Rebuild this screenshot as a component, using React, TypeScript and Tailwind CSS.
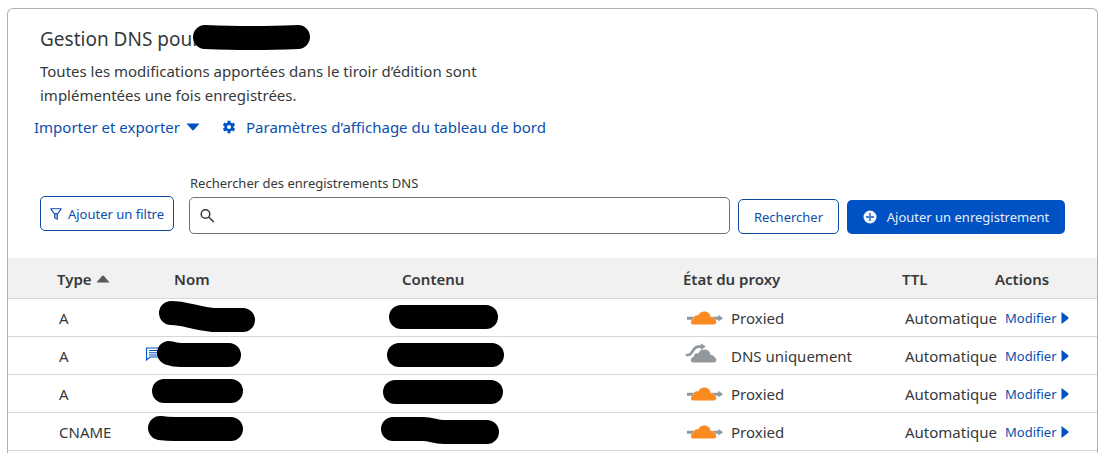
import React from "react";

type DnsRecord = {
  type: string;
  name: string;
  content: string;
  proxied: boolean;
  comment?: boolean;
};

const records: DnsRecord[] = [
  { type: "A", name: "M26 14 Q34 14 46 17 T68 21 H98", content: "M21 18 H106", proxied: true },
  { type: "A", name: "M24 16 Q30 18 36 18 H84", content: "M19 18 H112", proxied: false, comment: true },
  { type: "A", name: "M19 16 H86", content: "M15 17 H111", proxied: true },
  { type: "CNAME", name: "M15 15 Q22 16 30 16 H86", content: "M13 16 H43 C52 16 54 19 64 19 H107", proxied: true },
];

function Mask({ d }: { d: string }) {
  return (
    <svg className="block h-[37px] w-[130px]" viewBox="0 0 130 37" aria-hidden="true">
      <path d={d} fill="none" stroke="#000" strokeWidth="24" strokeLinecap="round" strokeLinejoin="round" />
    </svg>
  );
}

const cloud =
  "M9.500 17.500Q8 17.500 8 15.500C8 13.200 9.200 12 11 11.800C10.600 9.300 12.800 7.600 15.300 8.600C16.200 6 18.600 4.500 21.500 4.500C25 4.500 27.200 6.800 27.600 10.200C29.600 9.800 31 10.600 31.200 12.200C32.600 12.500 33.300 13.600 33.300 15C33.300 16.500 32.400 17.500 31 17.500Z";

function ProxyIcon({ proxied }: { proxied: boolean }) {
  return proxied ? (
    <svg className="h-[22px] w-10 shrink-0" viewBox="0 0 40 22" aria-hidden="true">
      <path d="M4 9.700h8v3H4zM28 9.700h7.500V7.800l4.500 3.400-4.500 3.400v-1.900H28z" fill="#92979b" />
      <path d={cloud} fill="#f98b20" stroke="#fff" strokeWidth=".6" paintOrder="stroke" />
    </svg>
  ) : (
    <svg className="h-[22px] w-10 shrink-0 overflow-visible" viewBox="0 0 40 22" aria-hidden="true">
      <path d={cloud} fill="#92979b" />
      <path d="M2.700 10h2.300c5 0 4.500-8.300 10.500-8.300h2.800" fill="none" stroke="#92979b" strokeWidth="2.700" />
      <path d="M17.800-1.700l5 3.300-5 3.300z" fill="#92979b" />
    </svg>
  );
}

export default function App() {
  return (
    <main className="bg-white px-[7px] pt-2 font-['Noto_Sans','Open_Sans',sans-serif] text-[15px] leading-6 text-[#36393a]">
      <section className="mr-[7px] rounded-t-md border border-b-0 border-[#b0b0b0]">
        <header className="pt-4 pl-8">
          <h1 className="relative text-[19px] leading-7">
            Gestion DNS pour
            <svg className="absolute -top-1 left-[150px] h-8 w-[124px]" viewBox="0 0 124 32" aria-hidden="true">
              <path d="M15 16 Q40 17 60 17 T108 16" fill="none" stroke="#000" strokeWidth="24" strokeLinecap="round" />
            </svg>
          </h1>
          <p className="mt-1.5 max-w-[460px]">
            Toutes les modifications apportées dans le tiroir d’édition sont implémentées une fois enregistrées.
          </p>
          <nav className="mt-2 -ml-1.5 flex items-center text-[#0b4fae]">
            <button type="button" className="flex items-center gap-1.5">
              Importer et exporter
              <svg className="h-2 w-3.5" viewBox="0 0 14 8" aria-hidden="true">
                <path d="M.5.500h13L8 6.800q-1 1-2 0z" fill="#0051c3" />
              </svg>
            </button>
            <a href="#parametres" className="ml-[22px] flex items-center gap-2.5">
              <svg className="size-3.5" viewBox="0 0 14 14" aria-hidden="true">
                <circle cx="7" cy="7" r="3.400" fill="none" stroke="#0051c3" strokeWidth="2.600" />
                <path
                  d="M7 .8v2M7 11.200v2M1.600 3.900l1.800 1M10.600 9.100l1.800 1M1.600 10.100l1.800-1M10.600 4.900l1.800-1"
                  stroke="#0051c3"
                  strokeWidth="3"
                />
              </svg>
              Paramètres d’affichage du tableau de bord
            </a>
          </nav>
        </header>

        <form className="mt-8 mb-6 flex items-end pr-8 pl-8 text-[13px]" onSubmit={(e) => e.preventDefault()}>
          <button
            type="button"
            className="mb-[3px] flex h-[35px] w-[134px] shrink-0 items-center justify-center gap-1.5 rounded-[5px] border border-[#0b4a9e] whitespace-nowrap text-[#0b4fae]"
          >
            <svg className="size-3 shrink-0" viewBox="0 0 12 12" aria-hidden="true">
              <path d="M.8.800h10.400L7.500 5.800H4.500z" fill="none" stroke="#0b4fae" strokeWidth="1.100" strokeLinejoin="round" />
              <path d="M4.500 5.800h3v5.700l-3-1.500z" fill="#7da2d6" stroke="#0b4fae" strokeWidth=".8" />
            </svg>
            Ajouter un filtre
          </button>
          <div className="ml-[15px] flex flex-1 flex-col">
            <label htmlFor="search" className="mb-0.5 pl-px leading-6">
              Rechercher des enregistrements DNS
            </label>
            <div className="flex h-[37px] items-center rounded-[5px] border border-[#6e7275] pl-2.5">
              <svg className="size-4 shrink-0" viewBox="0 0 16 16" aria-hidden="true">
                <circle cx="5.500" cy="6" r="4.300" fill="none" stroke="#36393a" strokeWidth="1.500" />
                <path d="M8.600 9l5.200 5" stroke="#36393a" strokeWidth="1.600" />
              </svg>
              <input id="search" type="text" className="min-w-0 flex-1 bg-transparent px-2 outline-none" />
            </div>
          </div>
          <button
            type="submit"
            className="ml-2 h-[35px] w-[101px] shrink-0 rounded-[5px] border border-[#0b4a9e] text-[#0b4fae]"
          >
            Rechercher
          </button>
          <button
            type="button"
            className="ml-2 flex h-[34px] w-[218px] shrink-0 items-center justify-center gap-2.5 rounded-[5px] bg-[#0051c3] whitespace-nowrap text-[#e6eefa]"
          >
            <svg className="size-3.5 shrink-0" viewBox="0 0 14 14" aria-hidden="true">
              <circle cx="7" cy="7" r="6.500" fill="#f0f5fc" />
              <path d="M7 3v8M3 7h8" stroke="#4a80d0" strokeWidth="1.800" />
            </svg>
            Ajouter un enregistrement
          </button>
        </form>

        <table className="w-full table-fixed border-collapse text-left whitespace-nowrap">
          <colgroup>
            <col className="w-[137px]" />
            <col className="w-[235px]" />
            <col />
            <col className="w-[218px]" />
            <col className="w-[94px]" />
            <col className="w-[110px]" />
          </colgroup>
          <thead>
            <tr className="h-10 border-b border-[#d5d7d8] bg-[#f1f1f1] [&>th]:p-0 [&>th]:pt-0.5 [&>th]:font-semibold">
              <th scope="col" aria-sort="ascending">
                <span className="flex items-center gap-1 pl-[49px]">
                  Type
                  <svg className="h-2 w-3.5" viewBox="0 0 14 8" aria-hidden="true">
                    <path d="M.5 7.500L6 1q1-1 2 0l5.500 6.500z" fill="#595959" />
                  </svg>
                </span>
              </th>
              <th scope="col"><span className="pl-[29px]">Nom</span></th>
              <th scope="col"><span className="pl-[22px]">Contenu</span></th>
              <th scope="col"><span className="pl-2">État du proxy</span></th>
              <th scope="col"><span className="pl-[9px]">TTL</span></th>
              <th scope="col"><span className="pl-2">Actions</span></th>
            </tr>
          </thead>
          <tbody>
            {records.map((r, i) => (
              <tr key={i} className="h-[38px] border-b border-[#d5d7d8] [&>td]:p-0">
                <td><span className="block pt-0.5 pl-[51px]">{r.type}</span></td>
                <td>
                  <div className="relative">
                    {r.comment && (
                      <svg className="absolute top-2.5 left-0 h-3.5 w-4" viewBox="0 0 16 14" aria-hidden="true">
                        <path d="M1.500 1H15v9H5l-3.500 3zM4 3.500h10M4 5.700h10M4 8h10" fill="none" stroke="#0051c3" strokeWidth="1.100" />
                      </svg>
                    )}
                    <div className="relative"><Mask d={r.name} /></div>
                  </div>
                </td>
                <td><Mask d={r.content} /></td>
                <td>
                  <span className="flex items-center gap-2 pt-0.5 pl-2">
                    <ProxyIcon proxied={r.proxied} />
                    {r.proxied ? "Proxied" : "DNS uniquement"}
                  </span>
                </td>
                <td><span className="block pt-0.5 pl-3">Automatique</span></td>
                <td>
                  <a href="#modifier" className="flex items-center gap-1 pt-0.5 pl-[18px] text-[13px] text-[#0b4fae]">
                    Modifier
                    <svg className="h-3 w-2" viewBox="0 0 8 12" aria-hidden="true">
                      <path d="M.5 0L7 5q1 1 0 2L.5 12z" fill="#0051c3" />
                    </svg>
                  </a>
                </td>
              </tr>
            ))}
          </tbody>
        </table>
        <div className="h-1" />
      </section>
    </main>
  );
}
